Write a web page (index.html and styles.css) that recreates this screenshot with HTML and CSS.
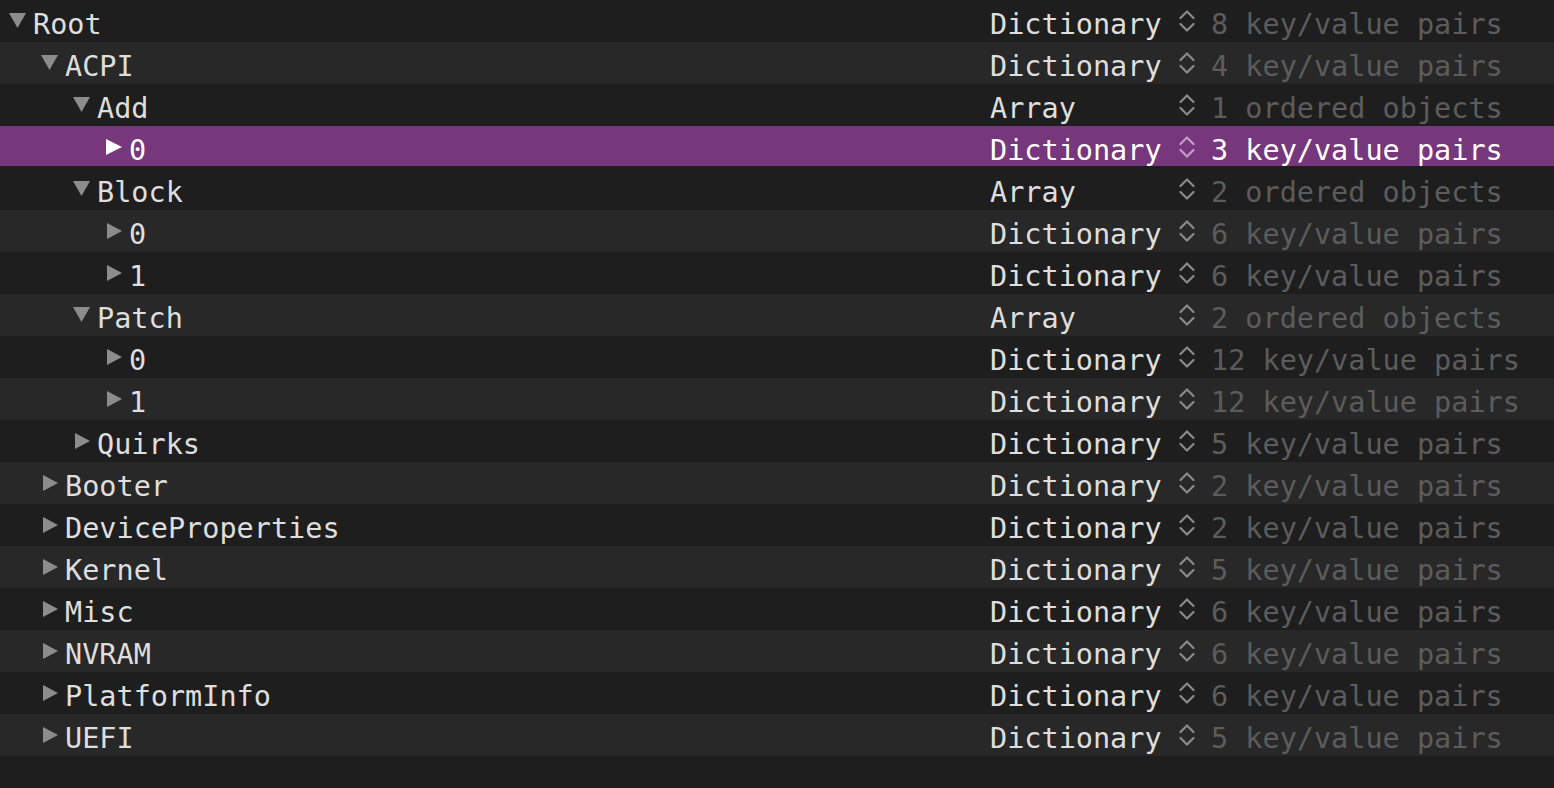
FILE: index.html
```html
<!DOCTYPE html>
<html>
<head>
<meta charset="utf-8">
<link rel="stylesheet" href="styles.css">
</head>
<body>
<div class="tree">
  <div class="row"><div class="key l0"><svg class="tri" viewBox="0 0 20 16"><polygon points="1,0 18,0 9.5,15"/></svg><span>Root</span></div><div class="type">Dictionary</div><svg class="step" viewBox="0 0 16 24"><path d="M1.5 9 L8 2.5 L14.5 9 M1.5 15 L8 21.5 L14.5 15"/></svg><div class="val">8 key/value pairs</div></div>
  <div class="row"><div class="key l1"><svg class="tri" viewBox="0 0 20 16"><polygon points="1,0 18,0 9.5,15"/></svg><span>ACPI</span></div><div class="type">Dictionary</div><svg class="step" viewBox="0 0 16 24"><path d="M1.5 9 L8 2.5 L14.5 9 M1.5 15 L8 21.5 L14.5 15"/></svg><div class="val">4 key/value pairs</div></div>
  <div class="row"><div class="key l2"><svg class="tri" viewBox="0 0 20 16"><polygon points="1,0 18,0 9.5,15"/></svg><span>Add</span></div><div class="type">Array</div><svg class="step" viewBox="0 0 16 24"><path d="M1.5 9 L8 2.5 L14.5 9 M1.5 15 L8 21.5 L14.5 15"/></svg><div class="val">1 ordered objects</div></div>
  <div class="row sel"><div class="key l3"><svg class="tri" viewBox="0 0 20 16"><polygon points="2,0 18,8 2,16"/></svg><span>0</span></div><div class="type">Dictionary</div><svg class="step" viewBox="0 0 16 24"><path d="M1.5 9 L8 2.5 L14.5 9 M1.5 15 L8 21.5 L14.5 15"/></svg><div class="val">3 key/value pairs</div></div>
  <div class="row"><div class="key l2"><svg class="tri" viewBox="0 0 20 16"><polygon points="1,0 18,0 9.5,15"/></svg><span>Block</span></div><div class="type">Array</div><svg class="step" viewBox="0 0 16 24"><path d="M1.5 9 L8 2.5 L14.5 9 M1.5 15 L8 21.5 L14.5 15"/></svg><div class="val">2 ordered objects</div></div>
  <div class="row"><div class="key l3"><svg class="tri" viewBox="0 0 20 16"><polygon points="3,0 18,8 3,16"/></svg><span>0</span></div><div class="type">Dictionary</div><svg class="step" viewBox="0 0 16 24"><path d="M1.5 9 L8 2.5 L14.5 9 M1.5 15 L8 21.5 L14.5 15"/></svg><div class="val">6 key/value pairs</div></div>
  <div class="row"><div class="key l3"><svg class="tri" viewBox="0 0 20 16"><polygon points="3,0 18,8 3,16"/></svg><span>1</span></div><div class="type">Dictionary</div><svg class="step" viewBox="0 0 16 24"><path d="M1.5 9 L8 2.5 L14.5 9 M1.5 15 L8 21.5 L14.5 15"/></svg><div class="val">6 key/value pairs</div></div>
  <div class="row"><div class="key l2"><svg class="tri" viewBox="0 0 20 16"><polygon points="1,0 18,0 9.5,15"/></svg><span>Patch</span></div><div class="type">Array</div><svg class="step" viewBox="0 0 16 24"><path d="M1.5 9 L8 2.5 L14.5 9 M1.5 15 L8 21.5 L14.5 15"/></svg><div class="val">2 ordered objects</div></div>
  <div class="row"><div class="key l3"><svg class="tri" viewBox="0 0 20 16"><polygon points="3,0 18,8 3,16"/></svg><span>0</span></div><div class="type">Dictionary</div><svg class="step" viewBox="0 0 16 24"><path d="M1.5 9 L8 2.5 L14.5 9 M1.5 15 L8 21.5 L14.5 15"/></svg><div class="val">12 key/value pairs</div></div>
  <div class="row"><div class="key l3"><svg class="tri" viewBox="0 0 20 16"><polygon points="3,0 18,8 3,16"/></svg><span>1</span></div><div class="type">Dictionary</div><svg class="step" viewBox="0 0 16 24"><path d="M1.5 9 L8 2.5 L14.5 9 M1.5 15 L8 21.5 L14.5 15"/></svg><div class="val">12 key/value pairs</div></div>
  <div class="row"><div class="key l2"><svg class="tri" viewBox="0 0 20 16"><polygon points="3,0 18,8 3,16"/></svg><span>Quirks</span></div><div class="type">Dictionary</div><svg class="step" viewBox="0 0 16 24"><path d="M1.5 9 L8 2.5 L14.5 9 M1.5 15 L8 21.5 L14.5 15"/></svg><div class="val">5 key/value pairs</div></div>
  <div class="row"><div class="key l1"><svg class="tri" viewBox="0 0 20 16"><polygon points="3,0 18,8 3,16"/></svg><span>Booter</span></div><div class="type">Dictionary</div><svg class="step" viewBox="0 0 16 24"><path d="M1.5 9 L8 2.5 L14.5 9 M1.5 15 L8 21.5 L14.5 15"/></svg><div class="val">2 key/value pairs</div></div>
  <div class="row"><div class="key l1"><svg class="tri" viewBox="0 0 20 16"><polygon points="3,0 18,8 3,16"/></svg><span>DeviceProperties</span></div><div class="type">Dictionary</div><svg class="step" viewBox="0 0 16 24"><path d="M1.5 9 L8 2.5 L14.5 9 M1.5 15 L8 21.5 L14.5 15"/></svg><div class="val">2 key/value pairs</div></div>
  <div class="row"><div class="key l1"><svg class="tri" viewBox="0 0 20 16"><polygon points="3,0 18,8 3,16"/></svg><span>Kernel</span></div><div class="type">Dictionary</div><svg class="step" viewBox="0 0 16 24"><path d="M1.5 9 L8 2.5 L14.5 9 M1.5 15 L8 21.5 L14.5 15"/></svg><div class="val">5 key/value pairs</div></div>
  <div class="row"><div class="key l1"><svg class="tri" viewBox="0 0 20 16"><polygon points="3,0 18,8 3,16"/></svg><span>Misc</span></div><div class="type">Dictionary</div><svg class="step" viewBox="0 0 16 24"><path d="M1.5 9 L8 2.5 L14.5 9 M1.5 15 L8 21.5 L14.5 15"/></svg><div class="val">6 key/value pairs</div></div>
  <div class="row"><div class="key l1"><svg class="tri" viewBox="0 0 20 16"><polygon points="3,0 18,8 3,16"/></svg><span>NVRAM</span></div><div class="type">Dictionary</div><svg class="step" viewBox="0 0 16 24"><path d="M1.5 9 L8 2.5 L14.5 9 M1.5 15 L8 21.5 L14.5 15"/></svg><div class="val">6 key/value pairs</div></div>
  <div class="row"><div class="key l1"><svg class="tri" viewBox="0 0 20 16"><polygon points="3,0 18,8 3,16"/></svg><span>PlatformInfo</span></div><div class="type">Dictionary</div><svg class="step" viewBox="0 0 16 24"><path d="M1.5 9 L8 2.5 L14.5 9 M1.5 15 L8 21.5 L14.5 15"/></svg><div class="val">6 key/value pairs</div></div>
  <div class="row"><div class="key l1"><svg class="tri" viewBox="0 0 20 16"><polygon points="3,0 18,8 3,16"/></svg><span>UEFI</span></div><div class="type">Dictionary</div><svg class="step" viewBox="0 0 16 24"><path d="M1.5 9 L8 2.5 L14.5 9 M1.5 15 L8 21.5 L14.5 15"/></svg><div class="val">5 key/value pairs</div></div>
</div>
</body>
</html>
```
FILE: styles.css
```css
html, body {
  margin: 0;
  padding: 0;
  background: #1e1e1e;
  height: 100%;
  overflow: hidden;
}
.tree {
  display: flex;
  flex-direction: column;
  font-family: "DejaVu Sans Mono", monospace;
  font-size: 28.5px;
  color: #dedede;
}
.row {
  display: flex;
  align-items: center;
  height: 42px;
  background: #1e1e1e;
  white-space: nowrap;
}
.row:nth-child(even) { background: #282828; }
.row.sel {
  background: linear-gradient(#77377d 0 40px, #1e1e1e 40px);
  color: #ffffff;
}
.key {
  width: 990px;
  height: 42px;
  display: flex;
  align-items: center;
  box-sizing: border-box;
  padding-top: 6px;
}
.l0 { padding-left: 8px; }
.l1 { padding-left: 40px; }
.l2 { padding-left: 72px; }
.l3 { padding-left: 104px; }
.tri {
  width: 20px;
  height: 16px;
  margin-right: 5px;
  margin-top: -7px;
  fill: #8c8c8c;
  flex: none;
}
.sel .tri { fill: #ffffff; }
.type {
  width: 189px;
  padding-top: 6px;
}
.step {
  width: 16px;
  height: 24px;
  margin-right: 16px;
  margin-top: -1px;
  fill: none;
  stroke: #8a8a8a;
  stroke-width: 2.2;
  stroke-linecap: round;
  stroke-linejoin: round;
  flex: none;
}
.sel .step { stroke: #c49bc9; }
.val {
  color: #5c5c5c;
  padding-top: 6px;
}
.sel .val { color: #ffffff; }
```
